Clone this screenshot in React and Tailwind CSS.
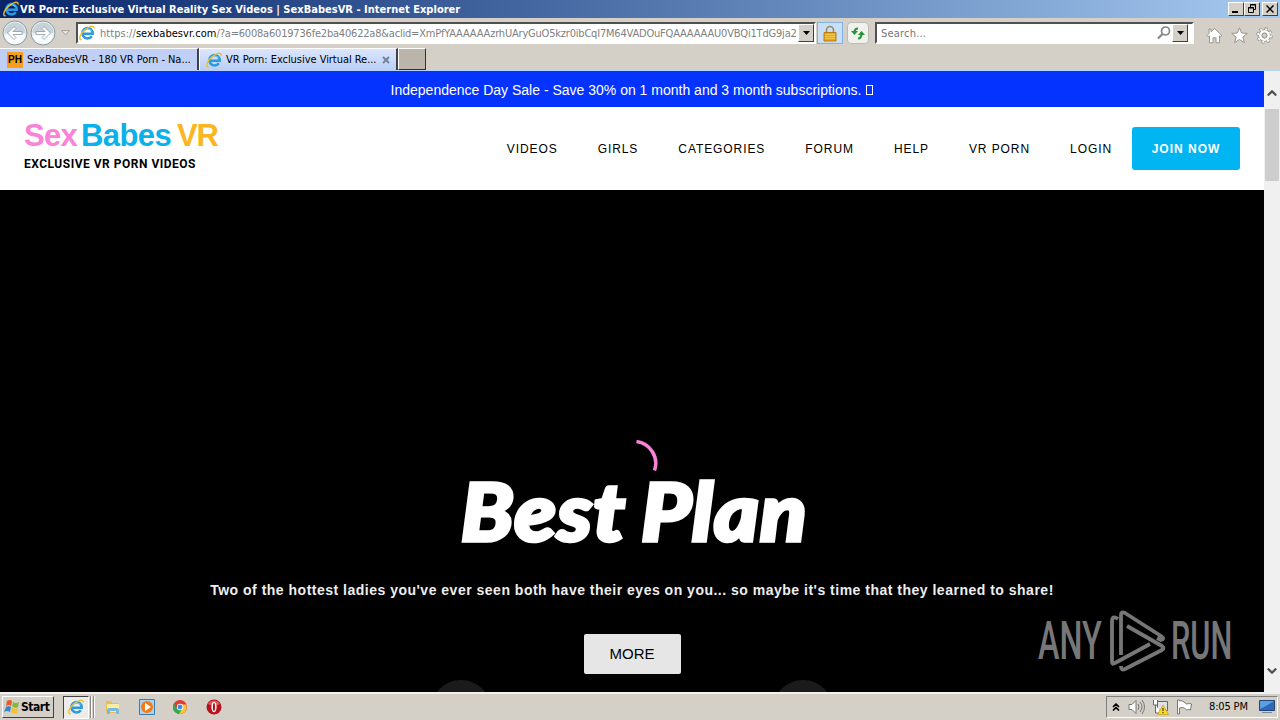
import { ChevronDown, ChevronUp, ChevronsUp } from 'lucide-react'

const tahoma = "font-['DejaVu_Sans_Condensed','DejaVu_Sans',sans-serif] [font-stretch:condensed]"
const arial = "font-['Liberation_Sans',sans-serif]"
const raised = 'border border-t-white border-l-white border-r-[#404040] border-b-[#404040] bg-[#d4d0c8]'

const navItems = ['VIDEOS', 'GIRLS', 'CATEGORIES', 'FORUM', 'HELP', 'VR PORN', 'LOGIN']

function IeIcon({ size = 16, className = '' }) {
  return (
    <svg width={size} height={size} viewBox="0 0 16 16" fill="none" className={`shrink-0 ${className}`}>
      <path d="M12.8 11.2A5.2 5.2 0 1 1 13.7 8.7H4.2" stroke="#2c9ade" strokeWidth="2.5" />
      <path d="M4 7.2a5 4.800 0 0 1 8.500-1.500" stroke="#74cdf4" strokeWidth="1.2" />
      <path d="M2.6 14.8C-1 15 1 8.800 6 4.700 10 1.300 15.500-.4 15.200 3.600" stroke="#f0bd25" strokeWidth="1.4" />
    </svg>
  )
}

function NavArrow({ flip }) {
  return (
    <svg width="28" height="26" viewBox="0 0 28 26" className={flip ? '-scale-x-100' : ''}>
      <circle cx="14" cy="13" r="12" fill="#e9eef1" stroke="#879ba7" />
      <path d="M3.500 13a10.500 10.500 0 0 1 21 0" fill="#c7d2da" />
      <path d="M4 15a10 9 0 0 0 20 0" fill="#f8fcfd" />
      <path d="M13 6.500 6.500 13l6.500 6.500 2-2-3-3h9v-3h-9l3-3z" fill="#fff" stroke="#8799a4" strokeWidth=".8" />
    </svg>
  )
}

function DropButton() {
  return (
    <span className={`flex h-[18px] w-4 shrink-0 items-center justify-center ${raised}`}>
      <svg width="7" height="4" viewBox="0 0 7 4"><path d="M0 0h7L3.500 4z" fill="#000" /></svg>
    </span>
  )
}

function TitleBar() {
  return (
    <div className={`${tahoma} flex h-[18px] items-center bg-linear-to-r from-[#0a246a] to-[#a6caf0] pr-[2px] pl-[3px]`}>
      <IeIcon />
      <span className="ml-px text-[11px] leading-none font-bold tracking-[0.020px] whitespace-nowrap text-white">
        VR Porn: Exclusive Virtual Reality Sex Videos | SexBabesVR - Internet Explorer
      </span>
      <div className="ml-auto flex">
        <span className={`flex h-[14px] w-4 items-end pb-[2px] pl-[3px] ${raised}`}>
          <i className="h-[2px] w-[6px] bg-black" />
        </span>
        <span className={`flex h-[14px] w-4 items-center justify-center ${raised}`}>
          <svg width="10" height="10" viewBox="0 0 10 10" fill="none" stroke="#000">
            <path d="M3.500 3V.5h5v5H7M3 1h6M1 4h6M1.500 3.500h5v5h-5z" />
          </svg>
        </span>
        <span className={`ml-[2px] flex h-[14px] w-4 items-center justify-center ${raised}`}>
          <svg width="8" height="8" viewBox="0 0 8 8"><path d="m.5.5 7 7m0-7-7 7" stroke="#000" strokeWidth="1.500" /></svg>
        </span>
      </div>
    </div>
  )
}

function Toolbar() {
  return (
    <div className={`${tahoma} flex h-[30px] items-center bg-[#d4d0c8] pr-[7px] pl-[1px] text-[11px]`}>
      <NavArrow />
      <NavArrow flip />
      <svg width="9" height="6" viewBox="0 0 9 6" className="ml-1"><path d="M.5.5h8L4.500 5z" fill="#e4e2dc" stroke="#a9a59d" /></svg>
      <div className="ml-[6px] flex h-[22px] w-[740px] items-center border-2 border-t-[#505050] border-r-white border-b-white border-l-[#505050] bg-white">
        <IeIcon className="ml-px" />
        <span className="mt-[2px] ml-[5px] w-[698px] tracking-[-0.200px] whitespace-nowrap text-[#808080]">
          <span className="tracking-[0.050px]">https://<span className="text-black">sexbabesvr.com</span></span>
          /?a=6008a6019736fe2ba40622a8&amp;aclid=XmPfYAAAAAAzrhUAryGuO5kzr0ibCqI7M64VADOuFQAAAAAAU0VBQi1TdG9ja2
        </span>
        <DropButton />
      </div>
      <span className="ml-[1px] flex h-[22px] w-[26px] items-center justify-center border border-[#7eb4ea] bg-[#c9dff8]">
        <svg width="14" height="17" viewBox="0 0 14 17">
          <path d="M3.500 8V5a3.500 3.500 0 0 1 7 0v3" fill="none" stroke="#9b8b62" strokeWidth="1.600" />
          <path d="M1 7.500h12v8.500H1z" fill="#e4a81c" stroke="#b67d12" />
          <path d="M2 9.500h10M2 11.500h10M2 13.500h10" stroke="#f8cf58" strokeWidth=".8" />
        </svg>
      </span>
      <span className="ml-1 flex h-[22px] w-[22px] items-center justify-center rounded-sm border border-[#bdbab3] bg-[#f0f0ed]">
        <svg width="16" height="14" viewBox="0 0 16 14" fill="none" stroke="#26923a" strokeWidth="2">
          <path d="M8 2.500C6 2.500 4.500 3.500 4.500 6.500" /><path d="m1 5 3.500 4L8 5z" fill="#26923a" stroke="none" />
          <path d="M8 12.500c2.500 0 3.500-1.500 3.500-5" /><path d="m8 9 3.500-4L15 9z" fill="#26923a" stroke="none" />
        </svg>
      </span>
      <div className="ml-[6px] flex h-[22px] w-[319px] items-center border-2 border-t-[#505050] border-r-white border-b-white border-l-[#505050] bg-white pr-[3px] pl-[4px]">
        <span className="mt-[2px] tracking-[0.200px] text-[#777]">Search...</span>
        <svg width="14" height="14" viewBox="0 0 14 14" fill="none" stroke="#858585" className="ml-auto">
          <circle cx="8.500" cy="5" r="4" strokeWidth="1.700" /><path d="M5.500 8 1 12.500" strokeWidth="2.200" />
        </svg>
        <span className="ml-px flex pr-px"><DropButton /></span>
      </div>
      <div className="mt-[4px] ml-auto flex items-center gap-2">
        <svg width="17" height="17" viewBox="0 0 17 17" fill="#fff" stroke="#97938d" strokeLinejoin="round">
          <path d="m8.500 1.500 7.500 7-1.300 1.300-1.200-1v7h-3.500v-5H7v5H3.500v-7l-1.200 1L1 8.500l2-2V2h2v2.700z" />
        </svg>
        <svg width="17" height="17" viewBox="0 0 17 17" fill="#fff" stroke="#97938d" strokeLinejoin="round">
          <path d="m8.500.8 2.100 5.200 5.700.4-4.400 3.600 1.400 5.600-4.800-3.100-4.800 3.100 1.400-5.600L.7 6.400 6.400 6z" />
        </svg>
        <svg width="17" height="17" viewBox="0 0 17 17" fill="none">
          <circle cx="8.500" cy="8.500" r="6.700" stroke="#918d87" strokeWidth="3" strokeDasharray="2.800 2.460" />
          <circle cx="8.500" cy="8.500" r="4.500" fill="#fff" stroke="#918d87" strokeWidth="3.500" />
          <circle cx="8.500" cy="8.500" r="6.500" stroke="#fff" strokeWidth="1.800" strokeDasharray="2 3.105" />
          <circle cx="8.500" cy="8.500" r="4.200" fill="#d4d0c8" stroke="#fff" strokeWidth="2.500" />
          <circle cx="8.500" cy="8.500" r="2.500" fill="#d4d0c8" stroke="#918d87" />
        </svg>
      </div>
    </div>
  )
}

function TabStrip() {
  return (
    <div className={`${tahoma} flex h-[23px] border-b border-[#b9d1f5] bg-[#d4d0c8] text-[11px] text-black`}>
      <div className="flex w-[199px] items-center border-t border-r-2 border-t-white border-r-[#404040] bg-[#bfcff5] pl-[7px]">
        <span className="flex h-4 w-4 items-center justify-center bg-[#f99d1c] font-['Liberation_Sans',sans-serif] text-[10px] font-bold">PH</span>
        <span className="mt-[2px] ml-1 tracking-[-0.050px] whitespace-nowrap">SexBabesVR - 180 VR Porn - Na...</span>
      </div>
      <div className="flex w-[199px] items-center border-t border-r-2 border-l border-t-white border-r-[#404040] border-l-white bg-linear-to-b from-[#dce6fb] to-[#b9cff7] pl-[6px]">
        <IeIcon />
        <span className="mt-[2px] ml-1 tracking-[-0.040px] whitespace-nowrap">VR Porn: Exclusive Virtual Re...</span>
        <svg width="8" height="8" viewBox="0 0 8 8" className="mr-[6px] ml-auto"><path d="m1 1 6 6m0-6L1 7" stroke="#718096" strokeWidth="1.800" /></svg>
      </div>
      <div className="h-[22px] w-7 border border-t-white border-r-[#303030] border-b-[#303030] border-l-white bg-[#bbb4aa]" />
    </div>
  )
}

function SiteHeader() {
  return (
    <header className="flex h-[83px] bg-white pr-6 pl-6 text-black">
      <div className="pt-[11px]">
        <div className={`${arial} flex h-[36px] text-[31px] leading-[36px] font-bold`}>
          <span className="tracking-[-0.700px] text-[#fa82d7]">Sex</span>
          <span className="ml-[4px] tracking-[-0.600px] text-[#0bb1e8]">Babes</span>
          <span className="ml-[6px] tracking-[-1.300px] text-[#fbb520]">VR</span>
        </div>
        <p className="mt-[2px] font-['Roboto',sans-serif] text-[12px] leading-4 font-bold tracking-[0.500px] whitespace-nowrap">
          EXCLUSIVE VR PORN VIDEOS
        </p>
      </div>
      <nav className={`${arial} ml-auto flex items-center text-[12px] tracking-[0.920px]`}>
        {navItems.map((item) => (
          <a key={item} className="px-5 whitespace-nowrap">{item}</a>
        ))}
        <a className="flex h-[43px] w-[108px] items-center justify-center rounded-[3px] bg-[#00b5f1] font-bold tracking-[1px] whitespace-nowrap text-white">
          JOIN NOW
        </a>
      </nav>
    </header>
  )
}

function Watermark() {
  return (
    <div className="absolute top-[420px] left-[1038px] flex h-[62px] w-[194px] items-center justify-between font-['Roboto',sans-serif] text-[53px] leading-none font-medium text-[#777]">
      <span className="w-[66px] origin-left scale-x-[0.610] whitespace-nowrap">ANY</span>
      <svg width="56" height="62" viewBox="0 0 56 62" fill="none" stroke="#777" strokeWidth="3.800" strokeLinejoin="round" className="shrink-0">
        <path d="M8 9C4 6 2 7 2 12v40q0 3 3 1L40 34" />
        <path d="M11 45V5q0-4 4-2l36 23q4 3 0 4l-4-2" />
        <path d="m17 16 35 20q3 2 0 4L15 59q-4 2-4-3" />
      </svg>
      <span className="w-[61px] origin-left scale-x-[0.580] whitespace-nowrap">RUN</span>
    </div>
  )
}

function Hero() {
  return (
    <section className={`${arial} relative flex h-[502px] flex-col items-center overflow-hidden bg-black text-white`}>
      <svg width="48" height="48" viewBox="0 0 48 48" fill="none" className="mt-[249px] ml-1 shrink-0">
        <path d="M26.500 2.500A22 22 0 0 1 44.500 31.500" stroke="#fa82d7" strokeWidth="3.500" />
      </svg>
      <h1 className="-mt-[27px] ml-[5px] scale-x-[1.070] font-['Lato',sans-serif] text-[80px] leading-[100px] font-black tracking-[1px] [word-spacing:-4px] whitespace-nowrap italic [-webkit-text-stroke:3.500px_white]">
        Best Plan
      </h1>
      <p className="mt-[20px] text-[14px] leading-5 font-bold tracking-[0.500px] whitespace-nowrap text-[#eee]">
        Two of the hottest ladies you've ever seen both have their eyes on you... so maybe it's time that they learned to share!
      </p>
      <button className="mt-[34px] h-10 w-[97px] shrink-0 rounded-[2px] bg-[#e6e6e6] text-[15px] text-black">MORE</button>
      <div className="mt-[6px] flex shrink-0 gap-[282px]">
        <span className="h-[60px] w-[60px] rounded-full bg-[#1b1b1b]" />
        <span className="h-[60px] w-[60px] rounded-full bg-[#1b1b1b]" />
      </div>
      <Watermark />
    </section>
  )
}

function ScrollBar() {
  return (
    <div className="flex w-4 flex-col items-center bg-[#f0f0f0] pt-[15px] pb-[14px] text-[#505050]">
      <ChevronUp size={14} strokeWidth={4} />
      <div className="mt-[9px] h-[72px] w-[14px] bg-[#cdcdcd]" />
      <ChevronDown size={14} strokeWidth={4} className="mt-auto" />
    </div>
  )
}

function Taskbar() {
  return (
    <div className={`${tahoma} flex h-7 items-center border-t-2 border-t-[#f2f0ec] bg-[#d4d0c8] pr-[2px] pl-[2px] text-[11px] text-black`}>
      <div className={`flex h-[22px] w-[52px] items-center gap-px pl-px font-bold ${raised}`}>
        <svg width="16" height="16" viewBox="0 0 16 16" className="shrink-0">
          <path d="M3 2q3-2 5 0L7 7Q5 5 2 7z" fill="#e95b23" />
          <path d="M9 3q3 2 6 0l-1 5q-3 2-6-1z" fill="#83b83c" />
          <path d="M2 8q3-2 5 0l-1 5q-3-2-6 0z" fill="#3489d4" />
          <path d="M8 8q3 3 6 1l-1 5q-3 2-6-1z" fill="#f4c32f" />
        </svg>
        <span className="text-[12px] tracking-[-0.450px]">Start</span>
      </div>
      <div className="ml-[9px] flex h-[23px] w-[26px] items-center justify-center border border-t-[#404040] border-r-white border-b-white border-l-[#404040] bg-[#eeece8]">
        <IeIcon size={16} />
      </div>
      <i className="ml-px h-[22px] w-px bg-[#8c8881]" /><i className="h-[22px] w-px bg-white" /><i className="ml-px h-[22px] w-px bg-[#8c8881]" /><i className="h-[22px] w-px bg-white" />
      <svg width="16" height="16" viewBox="0 0 16 16" className="ml-[10px]">
        <path d="M1 2h5l1 2h7v10H1z" fill="#e2bf57" /><path d="M2 5h12v8H2z" fill="#faeaa2" />
        <path d="M2 15v-4q0-2 2-2h8q2 0 2 2v4h-3v-3H5v3z" fill="#78bae3" />
      </svg>
      <svg width="16" height="16" viewBox="0 0 16 16" className="ml-[18px]">
        <path d="M.5.5h15v15H.5z" fill="#a9d3f2" stroke="#397eb8" /><circle cx="8" cy="8" r="6" fill="#f47b13" /><path d="m6 4 6 4-6 4z" fill="#fff" />
      </svg>
      <svg width="14" height="14" viewBox="0 0 16 16" className="ml-[18px]">
        <circle cx="8" cy="8" r="8" fill="#e33b2e" /><path d="M1 4a8 8 0 0 0 6 12l4-6-5 1z" fill="#35a852" />
        <path d="M15 5a8 8 0 0 1-8 11l4-7-3-4z" fill="#fbc928" /><circle cx="8" cy="8" r="3.600" fill="#fff" /><circle cx="8" cy="8" r="2.800" fill="#4387e9" />
      </svg>
      <svg width="16" height="16" viewBox="0 0 16 16" className="ml-[19px]">
        <circle cx="8" cy="8" r="7.500" fill="#b8121c" /><path d="M2 5a7 7 0 0 1 12 0q-6 3-12 0" fill="#dc5b58" />
        <ellipse cx="8" cy="8" rx="2.600" ry="5.300" fill="#fff" /><ellipse cx="8" cy="8" rx="1.100" ry="4" fill="#b8121c" />
      </svg>
      <div className="ml-auto flex h-[22px] w-[172px] items-center border border-t-[#808080] border-r-white border-b-white border-l-[#808080] pl-[3px]">
        <ChevronsUp size={12} strokeWidth={3.500} />
        <svg width="17" height="16" viewBox="0 0 17 16" fill="none" stroke="#777" className="ml-[6px]">
          <path d="M1 5.500h3l4-4v13l-4-4H1z" fill="#fff" /><path d="M10 5q2 3 0 6m2-8q4 5 0 10m2-12q5 7 0 14" />
        </svg>
        <svg width="17" height="16" viewBox="0 0 17 16" className="ml-[7px]">
          <path d="M5.500 2.500h10v9h-10z" fill="#dce2e5" stroke="#666" /><path d="M1.500 1v5h4V1M3.500 6v8h6" fill="#fff" stroke="#666" />
          <path d="m11 6 5.500 9.500h-11z" fill="#ffd91c" stroke="#ba970b" strokeWidth=".6" /><path d="M11 9v3m0 1v1.300" stroke="#222" />
        </svg>
        <svg width="16" height="16" viewBox="0 0 16 16" className="ml-[7px]">
          <path d="M1.500 1v14h2V9q3-1 5 0l2 2q2-1 4 0l1-6q-3-1-5 0L8 3Q6 1 3.500 2V1z" fill="#fff" stroke="#777" />
        </svg>
        <span className="mt-px ml-[17px] tracking-[-0.150px] whitespace-nowrap">8:05 PM</span>
        <svg width="16" height="14" viewBox="0 0 16 14" className="mr-[2px] ml-auto">
          <path d="M.5.5h15v10H.5z" fill="#2c6ab5" stroke="#234677" /><path d="M1 1h14L7 6 1 9z" fill="#5c9fe2" /><path d="M3 12h10v1H3z" fill="#75889d" />
        </svg>
      </div>
    </div>
  )
}

export default function App() {
  return (
    <div className="h-[720px] w-[1280px] overflow-hidden bg-[#d4d0c8]">
      <TitleBar />
      <Toolbar />
      <TabStrip />
      <div className="flex h-[621px]">
        <main className="w-[1264px] overflow-hidden">
          <div className={`${arial} flex h-9 items-center justify-center bg-[#0433ff] pt-[2px] text-[14px] text-white`}>
            Independence Day Sale - Save 30% on 1 month and 3 month subscriptions.
            <span className="ml-[5px] h-[10px] w-[7px] border border-white" />
          </div>
          <SiteHeader />
          <Hero />
        </main>
        <ScrollBar />
      </div>
      <Taskbar />
    </div>
  )
}
